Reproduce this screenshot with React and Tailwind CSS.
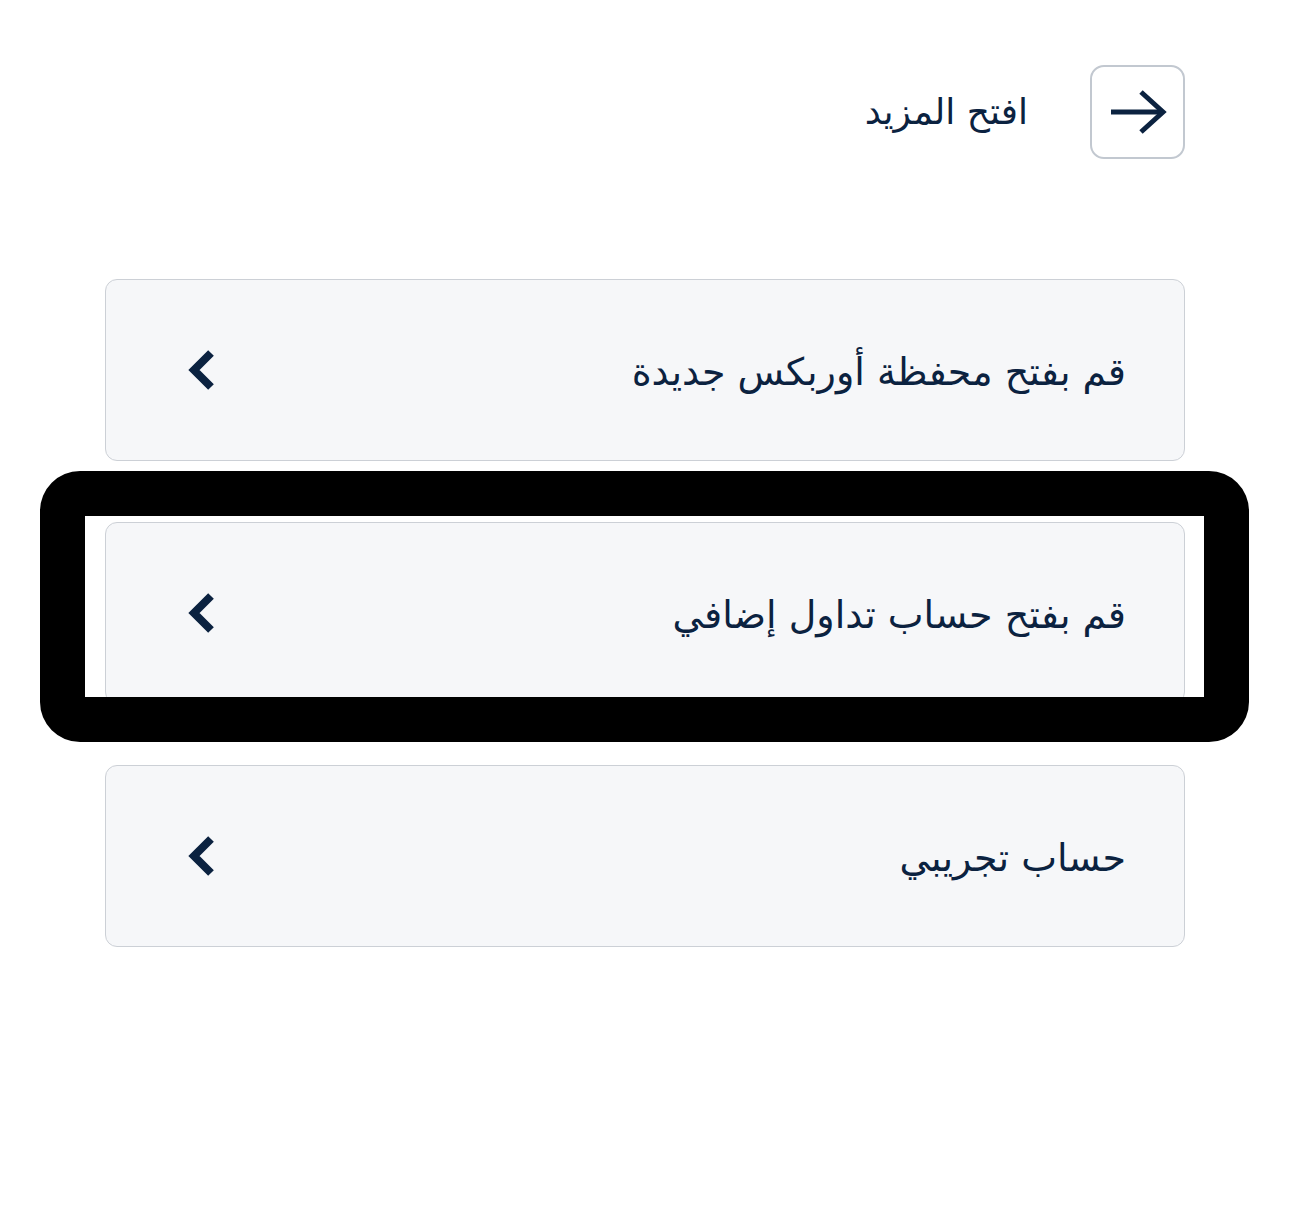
import React from 'react';

const items = [
  { label: 'قم بفتح محفظة أوربكس جديدة' },
  { label: 'قم بفتح حساب تداول إضافي', highlighted: true },
  { label: 'حساب تجريبي' },
];

function ChevronLeft() {
  return (
    <svg width="32" height="44" viewBox="0 0 32 44" fill="none">
      <polyline points="25,5 8,22 25,39" stroke="#0b2240" strokeWidth="8" strokeLinejoin="miter" />
    </svg>
  );
}

function ArrowRight() {
  return (
    <svg width="58" height="44" viewBox="0 0 58 44" fill="none">
      <line x1="2" y1="22" x2="54" y2="22" stroke="#0b2240" strokeWidth="5" />
      <polyline points="32,2 54,22 32,42" stroke="#0b2240" strokeWidth="5" strokeLinejoin="miter" />
    </svg>
  );
}

function Card({ label, highlighted }) {
  return (
    <div className="relative">
      <button className="flex h-[182px] w-full items-center justify-between rounded-[12px] border border-[#ccd0d6] bg-[#f6f7f9] pl-[80px] pr-[58px] text-[38px] text-[#0b2240]">
        <span className="pt-[4px]">{label}</span>
        <ChevronLeft />
      </button>
      {highlighted ? (
        <div className="pointer-events-none absolute -top-[51px] -bottom-[38px] -left-[65px] -right-[64px] rounded-[40px] border-[45px] border-black" />
      ) : null}
    </div>
  );
}

export default function App() {
  return (
    <div dir="rtl" className="min-h-[1224px] w-full bg-white font-['DejaVu_Sans',sans-serif]">
      <div className="px-[105px] pt-[65px]">
        <div className="flex items-center gap-[62px]">
          <button className="flex h-[94px] w-[95px] items-center justify-center rounded-[14px] border-2 border-[#c2c8d0] bg-white">
            <ArrowRight />
          </button>
          <span className="text-[36px] text-[#0b2240]">افتح المزيد</span>
        </div>
        <div className="mt-[120px] flex flex-col gap-[61px]">
          {items.map((item) => (
            <Card key={item.label} label={item.label} highlighted={item.highlighted} />
          ))}
        </div>
      </div>
    </div>
  );
}
